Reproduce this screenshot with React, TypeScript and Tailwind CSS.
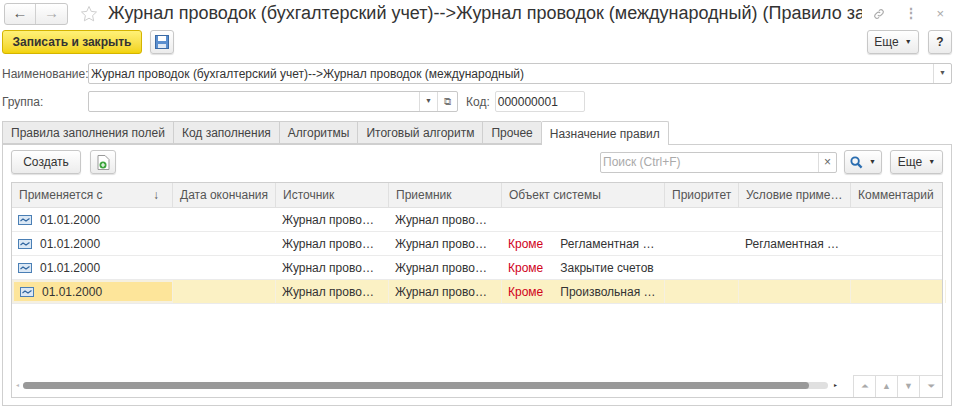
import React from "react";

const F = { fontFamily: '"Liberation Sans", Arial, sans-serif' };

function RowIcon() {
  return (
    <svg width="14" height="10" viewBox="0 0 14 10" className="shrink-0">
      <rect x="0.5" y="0.5" width="13" height="9" fill="#dbe8f5" stroke="#4a7fb5" />
      <path d="M2.5 6 L5 4 L8 6 L11.5 3.5" stroke="#2f65a0" strokeWidth="1.2" fill="none" />
    </svg>
  );
}

const cols = [161, 103, 113, 113, 163, 74, 112, 95];

function Btn({ children, className = "" }: { children: React.ReactNode; className?: string }) {
  return (
    <div className={`shrink-0 flex items-center justify-center h-[24px] border border-[#c8c8c8] rounded-[3px] bg-gradient-to-b from-white to-[#ececec] shadow-[0_1px_1px_rgba(0,0,0,0.12)] text-[12px] text-[#333] ${className}`}>
      {children}
    </div>
  );
}

export default function App() {
  const rows = [
    ["01.01.2000", "", "Журнал прово…", "Журнал прово…", "", "", "", ""],
    ["01.01.2000", "", "Журнал прово…", "Журнал прово…", "Регламентная …", "", "Регламентная …", ""],
    ["01.01.2000", "", "Журнал прово…", "Журнал прово…", "Закрытие счетов", "", "", ""],
    ["01.01.2000", "", "Журнал прово…", "Журнал прово…", "Произвольная …", "", "", ""],
  ];
  const heads = ["Применяется с", "Дата окончания", "Источник", "Приемник", "Объект системы", "Приоритет", "Условие приме…", "Комментарий"];
  return (
    <div style={F} className="w-[954px] h-[407px] bg-white text-[#333] text-[12px] overflow-hidden relative">
      {/* title bar */}
      <div className="flex items-center h-[25px] mt-[1px] pl-[4px]">
        <div className="shrink-0 flex h-[22px] border border-[#c8c8c8] rounded-[3px] bg-gradient-to-b from-white to-[#eee]">
          <div className="w-[31px] flex items-center justify-center border-r border-[#d0d0d0] text-[#555] text-[15px]">←</div>
          <div className="w-[31px] flex items-center justify-center text-[#aaa] text-[15px]">→</div>
        </div>
        <svg width="18" height="18" viewBox="0 0 24 24" className="ml-[12px] shrink-0">
          <path d="M12 2l3 6.5 7 .8-5.2 4.8 1.4 7L12 17.6 5.8 21.1l1.4-7L2 9.3l7-.8z" fill="none" stroke="#c8c8c8" strokeWidth="1.2" />
        </svg>
        <div className="ml-[10px] min-w-0 flex-1 text-[18px] text-[#333] whitespace-nowrap overflow-hidden">Журнал проводок (бухгалтерский учет)--&gt;Журнал проводок (международный) (Правило заполнени…</div>
        <div className="shrink-0 ml-[10px] flex items-center gap-[18px] pr-[10px] text-[#aaa]">
          <svg width="14" height="14" viewBox="0 0 24 24" fill="none" stroke="#aaa" strokeWidth="2"><path d="M10 14a4 4 0 0 0 5.6 0l3-3a4 4 0 0 0-5.6-5.6l-1 1" /><path d="M14 10a4 4 0 0 0-5.6 0l-3 3a4 4 0 0 0 5.6 5.6l1-1" /></svg>
          <span className="text-[14px] font-bold">⋮</span>
          <span className="text-[13px]">×</span>
        </div>
      </div>
      {/* toolbar */}
      <div className="flex items-center h-[24px] mt-[4px] px-[2px]">
        <div className="h-[24px] w-[140px] flex items-center justify-center rounded-[3px] border border-[#d4b400] bg-gradient-to-b from-[#fff176] to-[#f2d300] font-bold text-[12px] text-[#333]">Записать и закрыть</div>
        <Btn className="ml-[8px] w-[24px]">
          <svg width="14" height="14" viewBox="0 0 14 14"><rect x="0.5" y="0.5" width="13" height="13" fill="#5b8fcf" stroke="#3a6aa5" /><rect x="3" y="1" width="8" height="5" fill="#fff" /><rect x="3" y="9" width="8" height="4" fill="#dfe9f5" /></svg>
        </Btn>
        <Btn className="ml-auto w-[52px] gap-[6px]">Еще <span className="text-[7px]">▼</span></Btn>
        <Btn className="ml-[9px] w-[24px] font-bold">?</Btn>
      </div>
      {/* fields */}
      <div className="flex items-center h-[21px] mt-[9px] px-[2px]">
        <div className="w-[86px] text-[#555]">Наименование:</div>
        <div className="flex-1 h-[21px] border border-[#c8c8c8] rounded-[2px] flex items-center">
          <div className="flex-1 pl-[2px]">Журнал проводок (бухгалтерский учет)--&gt;Журнал проводок (международный)</div>
          <div className="w-[18px] h-full border-l border-[#ddd] flex items-center justify-center text-[7px] text-[#555]">▼</div>
        </div>
      </div>
      <div className="flex items-center h-[21px] mt-[7px] px-[2px]">
        <div className="w-[86px] text-[#555]">Группа:</div>
        <div className="w-[370px] h-[21px] border border-[#c8c8c8] rounded-[2px] flex">
          <div className="flex-1" />
          <div className="w-[18px] border-l border-[#ddd] flex items-center justify-center text-[7px] text-[#555]">▼</div>
          <div className="w-[20px] border-l border-[#ddd] flex items-center justify-center text-[10px] text-[#777]">⧉</div>
        </div>
        <div className="ml-[8px] text-[#555]">Код:</div>
        <div className="ml-[5px] w-[90px] h-[21px] border border-[#ddd] rounded-[2px] pl-[2px] flex items-center">000000001</div>
      </div>
      {/* tabs */}
      <div className="flex mt-[8px] ml-[2px] h-[24px] items-end">
        {["Правила заполнения полей", "Код заполнения", "Алгоритмы", "Итоговый алгоритм", "Прочее"].map((t) => (
          <div key={t} className="h-[23px] px-[8px] flex items-center bg-[#ececec] border border-[#cfcfcf] border-r-0 text-[#444]">{t}</div>
        ))}
        <div className="h-[24px] px-[8px] flex items-center bg-white border border-[#cfcfcf] border-b-0 rounded-t-[2px] text-[#444] relative top-[1px]">Назначение правил</div>
      </div>
      <div className="mx-[2px] h-[262px] border border-[#cfcfcf] px-[8px] pt-[5px]">
        <div className="flex items-center h-[24px]">
          <Btn className="w-[70px]">Создать</Btn>
          <Btn className="ml-[9px] w-[26px]">
            <svg width="13" height="15" viewBox="0 0 13 15"><path d="M1 .5h7l4 4v10H1z" fill="#fff" stroke="#999" /><circle cx="6" cy="10" r="3.5" fill="#3da53d" /><path d="M6 8v4M4 10h4" stroke="#fff" strokeWidth="1.2" /></svg>
          </Btn>
          <div className="ml-auto w-[237px] h-[21px] border border-[#c8c8c8] rounded-[2px] flex">
            <div className="flex-1 pl-[2px] flex items-center text-[#aaa]">Поиск (Ctrl+F)</div>
            <div className="w-[18px] border-l border-[#ddd] flex items-center justify-center text-[12px] text-[#666]">×</div>
          </div>
          <Btn className="ml-[7px] w-[38px] gap-[6px]">
            <svg width="13" height="13" viewBox="0 0 14 14"><circle cx="5.5" cy="5.5" r="4" fill="none" stroke="#2a6db0" strokeWidth="2" /><path d="M8.5 8.5l4 4" stroke="#2a6db0" strokeWidth="2.4" /></svg>
            <span className="text-[7px]">▼</span>
          </Btn>
          <Btn className="ml-[8px] w-[53px] gap-[6px]">Еще <span className="text-[7px]">▼</span></Btn>
        </div>
        {/* table */}
        <div className="mt-[8px] h-[216px] border border-[#cfcfcf] flex flex-col">
          <div className="flex h-[25px] bg-[#f2f2f2] border-b border-[#e0e0e0] text-[#555]">
            {heads.map((h, i) => (
              <div key={h} style={{ width: cols[i] }} className="shrink-0 flex items-center px-[7px] border-r border-[#e0e0e0] last:border-r-0 whitespace-nowrap overflow-hidden">
                {h}{i === 0 && <span className="ml-auto mr-[6px]">↓</span>}
              </div>
            ))}
          </div>
          {rows.map((r, ri) => {
            const sel = ri === 3;
            return (
              <div key={ri} className={`flex h-[24px] border-b border-[#ebebeb] ${sel ? "bg-[#fbf1c4]" : ""}`}>
                {r.map((c, i) => (
                  <div key={i} style={{ width: cols[i] }} className={`shrink-0 flex items-center px-[6px] whitespace-nowrap overflow-hidden ${sel ? "border-r border-[#f5f0e0]" : ""} ${sel && i === 0 ? "bg-[#fde59a] border-2 border-[#f0c83a] px-[4px]" : ""}`}>
                    {i === 0 && <><RowIcon /><span className="ml-[8px]">{c}</span></>}
                    {i === 4 && ri > 0 && <><span className="text-[#d0021b]">Кроме</span><span className="ml-[17px]">{c}</span></>}
                    {i !== 0 && i !== 4 && c}
                  </div>
                ))}
              </div>
            );
          })}
          <div className="flex-1" />
          <div className="flex items-center h-[24px] pl-[4px]">
            <span className="text-[6px] text-[#bbb]">◂</span>
            <div className="ml-[4px] w-[805px] h-[7px] rounded-full bg-[#e0e0e0]"><div className="w-[786px] h-[7px] rounded-full bg-[#999]" /></div>
            <span className="ml-[6px] text-[6px] text-[#333]">▸</span>
            <div className="ml-auto flex h-[22px] self-end border-t border-l border-[#ddd]">
              {["⏶", "▲", "▼", "⏷"].map((s, i) => (
                <div key={i} className="w-[22px] flex items-center justify-center text-[9px] text-[#aaa] border-r border-[#ddd] last:border-r-0">{s}</div>
              ))}
            </div>
          </div>
        </div>
      </div>
    </div>
  );
}
